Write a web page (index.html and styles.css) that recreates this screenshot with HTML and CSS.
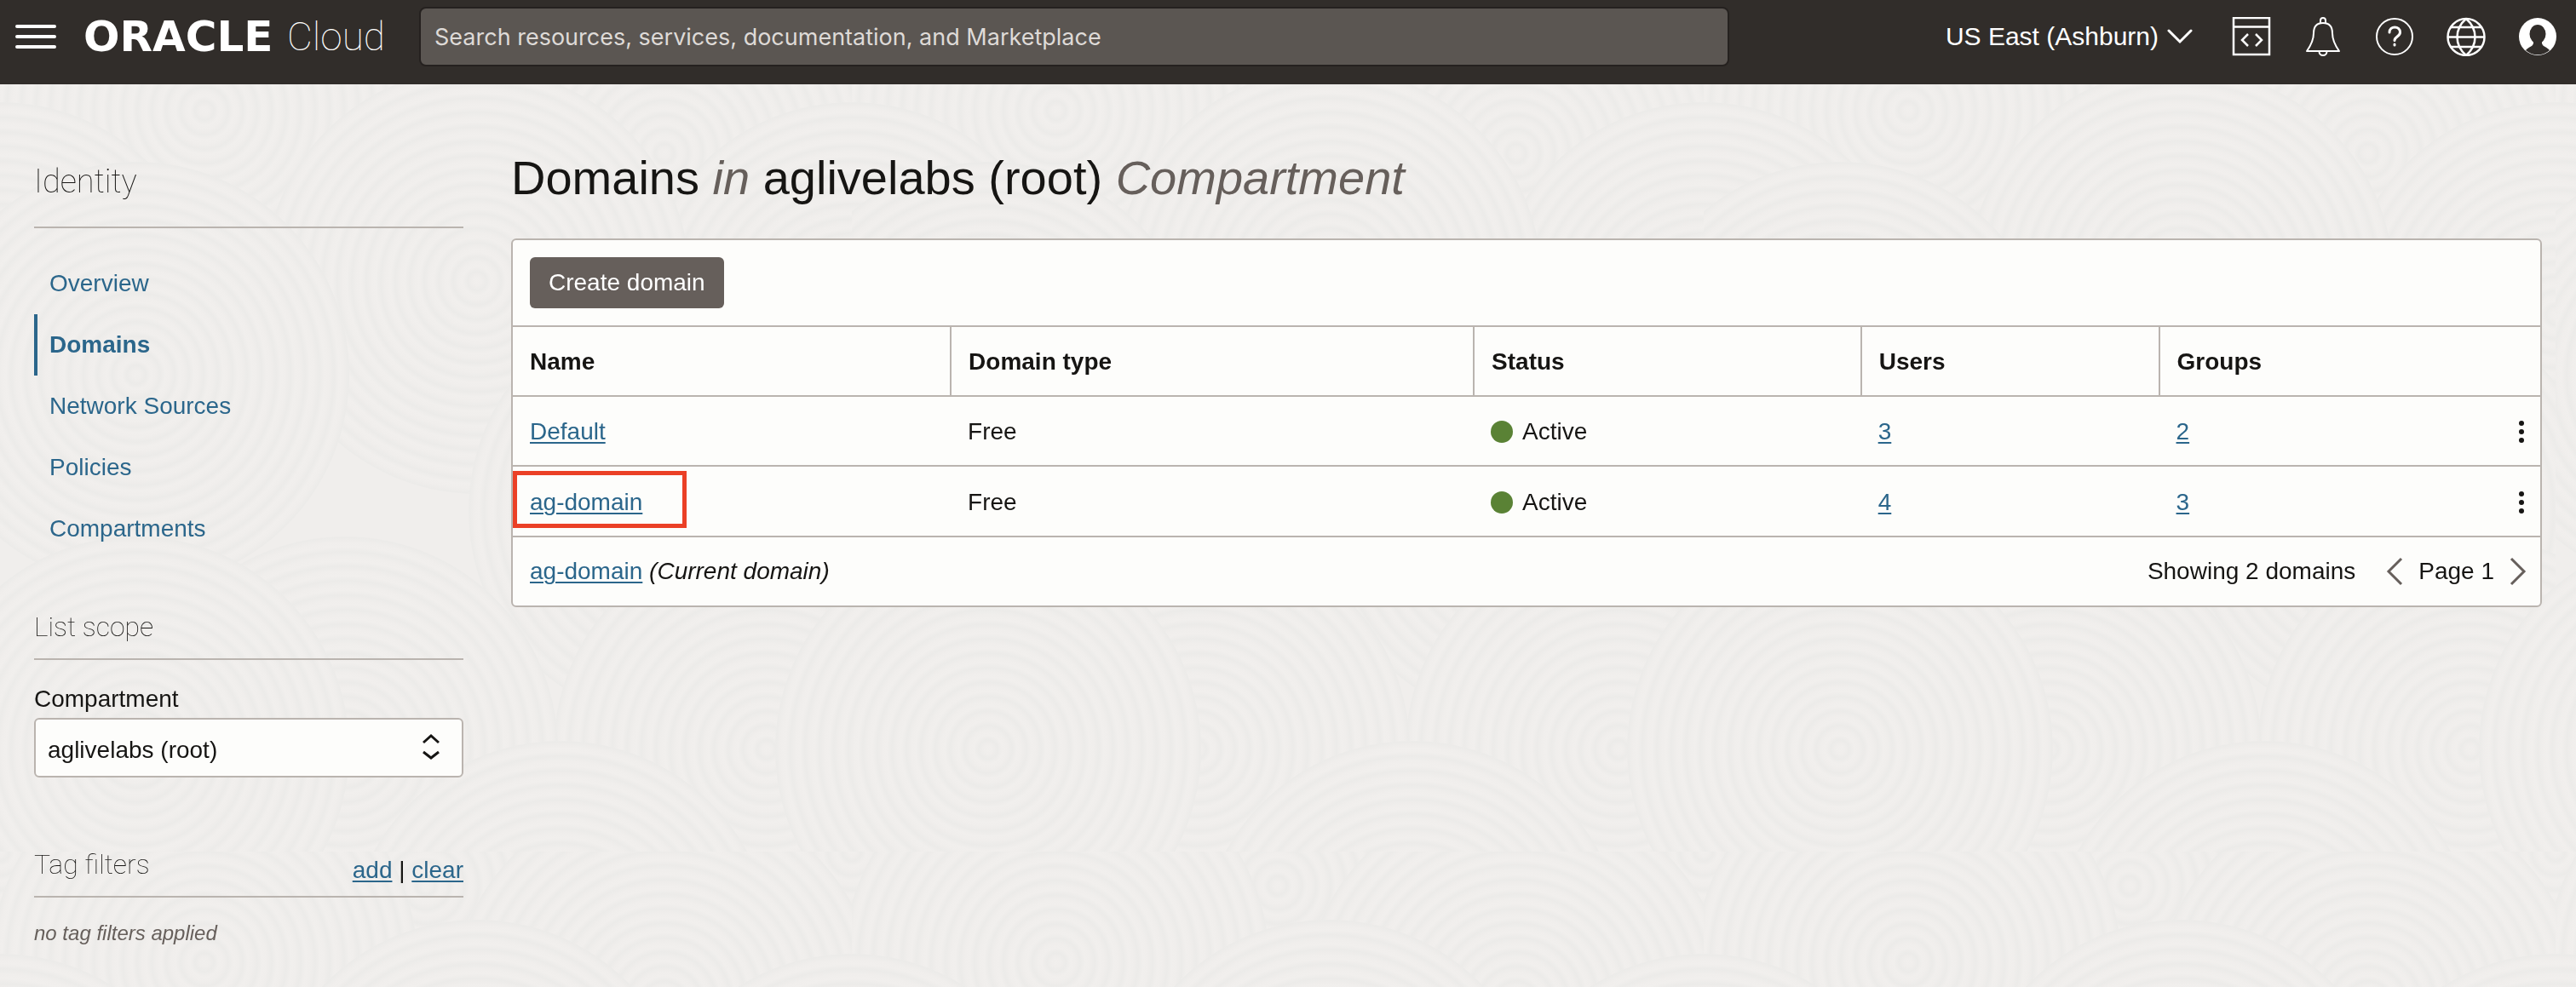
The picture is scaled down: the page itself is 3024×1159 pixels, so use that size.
FILE: index.html
```html
<!DOCTYPE html>
<html lang="en">
<head>
<meta charset="utf-8">
<meta name="viewport" content="width=device-width, initial-scale=1">
<title>Domains | Oracle Cloud Infrastructure</title>
<link rel="stylesheet" href="styles.css">
</head>
<body>
<svg class="backdrop" aria-hidden="true">
  <defs>
    <radialGradient id="rings" gradientUnits="userSpaceOnUse" cx="0" cy="0" r="17" spreadMethod="repeat">
      <stop offset="0" stop-color="#f1efed"/>
      <stop offset=".3" stop-color="#f0eeec"/>
      <stop offset=".65" stop-color="#ecebe9"/>
      <stop offset="1" stop-color="#f1efed"/>
    </radialGradient>
    <circle id="disc" r="250" fill="url(#rings)"/>
    <pattern id="waves" width="1000" height="1000" patternUnits="userSpaceOnUse">
      <rect width="1000" height="1000" fill="#f0eeec"/>
      <use href="#disc" x="0" y="0"/><use href="#disc" x="1000" y="0"/>
      <use href="#disc" x="500" y="40"/><use href="#disc" x="780" y="180"/>
      <use href="#disc" x="240" y="130"/><use href="#disc" x="0" y="370"/>
      <use href="#disc" x="1000" y="370"/><use href="#disc" x="560" y="330"/>
      <use href="#disc" x="800" y="600"/><use href="#disc" x="900" y="880"/>
      <use href="#disc" x="160" y="440"/>
      <use href="#disc" x="405" y="880"/><use href="#disc" x="160" y="880"/>
      <use href="#disc" x="1160" y="880"/><use href="#disc" x="658" y="1120"/>
    </pattern>
  </defs>
  <rect width="100%" height="100%" fill="url(#waves)"/>
</svg>

<header class="topbar">
  <button class="icon-button menu" aria-label="Navigation menu">
    <svg width="48" height="28" viewBox="0 0 48 28"><path d="M2 2h44M2 14h44M2 26h44" stroke="#fff" stroke-width="4" stroke-linecap="round"/></svg>
  </button>
  <a class="brand" href="#"><span class="brand-name">ORACLE</span><span class="brand-product">Cloud</span></a>
  <input class="search" type="search" aria-label="Search" placeholder="Search resources, services, documentation, and Marketplace">
  <button class="region">US East (Ashburn)
    <svg width="30" height="18" viewBox="0 0 30 18" fill="none"><path d="M2 2l13 13L28 2" stroke="#fff" stroke-width="3" stroke-linecap="round"/></svg>
  </button>
  <nav class="tools" aria-label="Tools">
    <button class="icon-button" aria-label="Developer tools">
      <svg width="46" height="46" viewBox="0 0 46 46" fill="none" stroke="#fff" stroke-width="2.500"><path d="M2 1h42v43H2zM2 11.500h42M19 20l-7 7 7 7M28 20l7 7-7 7"/></svg>
    </button>
    <button class="icon-button" aria-label="Announcements">
      <svg width="46" height="46" viewBox="0 0 46 46" fill="none" stroke="#fff" stroke-width="2" stroke-linejoin="round"><path d="M20 7V4a3 3 0 0 1 6 0v3M4 40c5-7 8-14 8-21C12 11 16 7 23 7s11 4 11 12c0 7 3 14 8 21zM18.500 40.500a4.500 4.500 0 0 0 9 0"/></svg>
    </button>
    <button class="icon-button" aria-label="Help">
      <svg width="46" height="46" viewBox="0 0 46 46" fill="none" stroke="#fff" stroke-width="2"><circle cx="23" cy="23" r="21"/><path stroke-width="3" stroke-linecap="round" d="M17 18c0-8 12.500-8 12.500 0 0 5-6.500 5-6.500 9.500M23 32v1"/></svg>
    </button>
    <button class="icon-button" aria-label="Language">
      <svg width="46" height="46" viewBox="0 0 46 46" fill="none" stroke="#fff" stroke-width="2.500"><circle cx="23" cy="23.500" r="21.500"/><path d="M23 2C9 14 9 33 23 45C37 33 37 14 23 2M1 23.500h44M5 12h36M5 35h36"/></svg>
    </button>
    <button class="icon-button" aria-label="Profile">
      <svg width="46" height="46" viewBox="0 0 46 46"><circle cx="23" cy="23" r="22" fill="#fff"/><ellipse cx="23" cy="20" rx="9.500" ry="11" fill="#312d2a"/><path fill="#312d2a" d="M18 29h10v2c1 4 6 4 9 8A21 21 0 0 1 9 39c3-4 8-4 9-8z"/></svg>
    </button>
  </nav>
</header>

<div class="layout">
  <aside class="sidebar">
    <h2 class="side-title">Identity</h2>
    <nav class="side-nav" aria-label="Identity">
      <a href="#">Overview</a>
      <a href="#" class="current" aria-current="page">Domains</a>
      <a href="#">Network Sources</a>
      <a href="#">Policies</a>
      <a href="#">Compartments</a>
    </nav>
    <section class="scope">
      <h3 class="side-heading">List scope</h3>
      <label class="field-label" for="compartment">Compartment</label>
      <div class="select-wrap">
        <select id="compartment"><option>aglivelabs (root)</option></select>
        <svg class="select-icon" width="22" height="32" viewBox="0 0 22 32" fill="none" stroke="#161513" stroke-width="3"><path d="M2 11l9-8 9 8M2 22l9 7 9-7"/></svg>
      </div>
    </section>
    <section class="filters">
      <div class="side-heading filters-head">
        <h3>Tag filters</h3>
        <span class="filter-actions"><a href="#">add</a> | <a href="#">clear</a></span>
      </div>
      <p class="filters-empty">no tag filters applied</p>
    </section>
  </aside>

  <main class="content">
    <h1>Domains <em>in</em> aglivelabs (root) <em>Compartment</em></h1>
    <div class="panel">
      <div class="panel-actions"><button class="create">Create domain</button></div>
      <table>
        <colgroup><col class="c-name"><col class="c-type"><col class="c-status"><col class="c-users"><col class="c-groups"></colgroup>
        <thead>
          <tr><th>Name</th><th>Domain type</th><th>Status</th><th>Users</th><th>Groups</th></tr>
        </thead>
        <tbody>
          <tr>
            <td><a href="#">Default</a></td><td>Free</td>
            <td><span class="status">Active</span></td><td><a href="#">3</a></td>
            <td><div class="last"><a href="#">2</a><button class="icon-button" aria-label="Actions for Default"><svg width="8" height="28" viewBox="0 0 8 28" fill="#161513"><circle cx="4" cy="4" r="3"/><circle cx="4" cy="14" r="3"/><circle cx="4" cy="24" r="3"/></svg></button></div></td>
          </tr>
          <tr>
            <td class="marked"><a href="#">ag-domain</a></td><td>Free</td>
            <td><span class="status">Active</span></td><td><a href="#">4</a></td>
            <td><div class="last"><a href="#">3</a><button class="icon-button" aria-label="Actions for ag-domain"><svg width="8" height="28" viewBox="0 0 8 28" fill="#161513"><circle cx="4" cy="4" r="3"/><circle cx="4" cy="14" r="3"/><circle cx="4" cy="24" r="3"/></svg></button></div></td>
          </tr>
        </tbody>
      </table>
      <div class="panel-footer">
        <span><a href="#">ag-domain</a> <i>(Current domain)</i></span>
        <div class="pager">
          <span class="count">Showing 2 domains</span>
          <button class="icon-button" aria-label="Previous page"><svg width="20" height="34" viewBox="0 0 20 34" fill="none"><path d="M18 2L3 17l15 15" stroke="#665f5b" stroke-width="3"/></svg></button>
          <span>Page 1</span>
          <button class="icon-button" aria-label="Next page"><svg width="20" height="34" viewBox="0 0 20 34" fill="none"><path d="M2 2l15 15L2 32" stroke="#665f5b" stroke-width="3"/></svg></button>
        </div>
      </div>
    </div>
  </main>
</div>
</body>
</html>
```
FILE: styles.css
```css
*, *::before, *::after { box-sizing: border-box; }

body {
  margin: 0;
  min-height: 100vh;
  background: #f0eeec;
  color: #161513;
  font: 28px/40px "Liberation Sans", Arial, sans-serif;
}

h1, h2, h3, p { margin: 0; font-weight: 400; }
a { color: #2b668b; text-decoration-thickness: 2px; text-underline-offset: 3px; }
button, input, select { font: inherit; color: inherit; }
button { border: 0; padding: 0; background: none; cursor: pointer; }
svg { display: block; flex: none; }

.backdrop {
  position: fixed;
  inset: 0;
  z-index: -1;
  width: 100%;
  height: 100%;
}

.icon-button { display: flex; }

.topbar {
  display: flex;
  align-items: center;
  height: 99px;
  padding: 0 22px 13px 18px;
  background: #312d2a;
  color: #fff;
}

.menu { margin-right: 32px; }

.brand {
  display: flex;
  align-items: center;
  justify-content: space-between;
  width: 354px;
  color: #fff;
  text-decoration: none;
}
.brand-name { font: 700 50px/50px "DejaVu Sans", sans-serif; }
.brand-product { font: 100 46px/50px Roboto, sans-serif; }

.search {
  flex: 0 1 1538px;
  min-width: 0;
  height: 70px;
  margin-left: 40px;
  padding: 0 16px;
  border: 2px solid #25211f;
  border-radius: 8px;
  background: #5b5652;
  color: #fff;
  font-family: Inter, sans-serif;
  font-size: 27px;
  appearance: none;
}
.search::placeholder { color: #dedad7; opacity: 1; }

.region {
  display: flex;
  align-items: center;
  gap: 10px;
  margin-left: auto;
  font-size: 30px;
  white-space: nowrap;
}

.tools { display: flex; gap: 38px; margin-left: 46px; }

.layout { display: flex; gap: 56px; padding: 0 40px; }

.sidebar { flex: 0 0 504px; }

.side-title {
  height: 169px;
  padding-top: 90px;
  border-bottom: 2px solid #bab4af;
  font: 100 38px/48px Roboto, sans-serif;
}

.side-nav { display: flex; flex-direction: column; padding-top: 29px; }
.side-nav a {
  height: 72px;
  padding-left: 14px;
  border-left: 4px solid transparent;
  line-height: 72px;
  text-decoration: none;
}
.side-nav .current { border-color: #2b668b; font-weight: 700; }

.scope { margin-top: 47px; }

.side-heading {
  height: 71px;
  border-bottom: 2px solid #bab4af;
  font: 100 32px/64px Roboto, sans-serif;
}

.field-label { display: block; margin-top: 26px; }

.select-wrap { position: relative; margin-top: 2px; }
.select-wrap select {
  display: block;
  width: 100%;
  height: 70px;
  padding: 6px 14px 0;
  border: 2px solid #bab4af;
  border-radius: 6px;
  background: #fdfdfb;
  appearance: none;
}
.select-icon {
  position: absolute;
  top: 18px;
  right: 27px;
  pointer-events: none;
}

.filters { margin-top: 70px; }
.filters-head { display: flex; justify-content: space-between; }
.filters-head h3 { font: inherit; }
.filter-actions { font: 28px/78px "Liberation Sans", Arial, sans-serif; }
.filters-empty { margin-top: 22px; color: #665f5b; font-size: 24px; font-style: italic; }

.content { flex: 1; min-width: 0; }

h1 { padding: 78px 0 39px; font-size: 56px; line-height: 64px; }
h1 em { color: #665f5b; }

.panel {
  border: 2px solid #bab4af;
  border-radius: 6px;
  background: #fdfdfb;
}

.panel-actions { padding: 20px; }

.create {
  display: block;
  height: 60px;
  padding: 0 22px;
  border-radius: 6px;
  background: #665f5b;
  color: #fff;
}

table { width: 100%; border-collapse: collapse; table-layout: fixed; }
.c-name { width: 21.6%; }
.c-type { width: 25.8%; }
.c-status { width: 19.1%; }
.c-users { width: 14.7%; }

th, td {
  height: 82px;
  padding: 2px 18px 0 20px;
  border-top: 2px solid #bab4af;
  text-align: left;
}
th + th { border-left: 2px solid #bab4af; }

.status { display: flex; align-items: center; gap: 11px; }
.status::before {
  content: "";
  width: 26px;
  height: 26px;
  border-radius: 50%;
  background: #5a8235;
}

.last { display: flex; align-items: center; justify-content: space-between; }

.marked { position: relative; }
.marked::after {
  content: "";
  position: absolute;
  top: 5px;
  left: 0;
  width: 204px;
  height: 67px;
  border: 5px solid #eb4026;
  pointer-events: none;
}

.panel-footer {
  display: flex;
  align-items: center;
  justify-content: space-between;
  height: 82px;
  padding: 0 16px 0 20px;
  border-top: 2px solid #bab4af;
}
.pager { display: flex; align-items: center; gap: 18px; }
.count { margin-right: 18px; }
```
